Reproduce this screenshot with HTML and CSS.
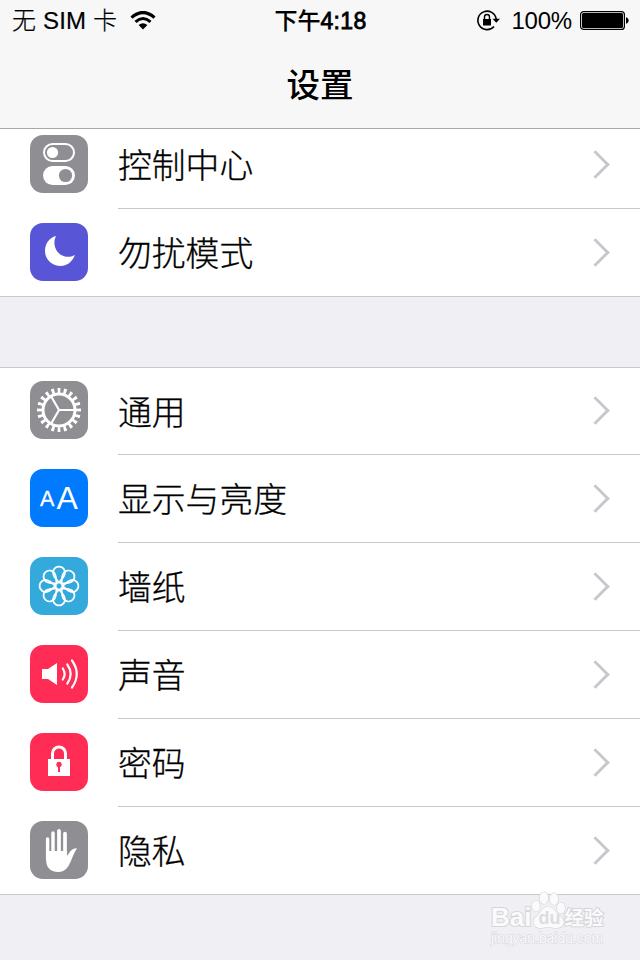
FILE: index.html
```html
<!DOCTYPE html>
<html lang="zh-CN">
<head>
<meta charset="utf-8">
<title>设置</title>
<link rel="stylesheet" href="styles.css">
</head>
<body>
<header class="header">
  <div class="status">
    <div class="carrier"><span>无 SIM 卡</span>
      <svg class="wifi" width="26" height="20" viewBox="0 0 26 20"><path d="M1.500 6.600Q13-3.600 24.500 6.600" fill="none" stroke="#000" stroke-width="3.200"/><path d="M5.500 10.800Q13 4.200 20.500 10.800" fill="none" stroke="#000" stroke-width="3"/><path d="M8.600 14.100Q13 10.200 17.400 14.100L13 18.500Z"/></svg>
    </div>
    <div class="time">下午<span class="digits">4:18</span></div>
    <div class="power">
      <svg class="rotation" width="26" height="24" viewBox="0 0 26 24"><path d="M18 18.500A9.200 9.200 0 1 1 20.200 11" fill="none" stroke="#000" stroke-width="1.600"/><path d="M16.500 10.800h7.500l-3.700 4z"/><path d="M7 11h8v6.500H7z"/><path d="M8.500 11.500V9a2.500 2.500 0 0 1 5 0v2.500" fill="none" stroke="#000" stroke-width="1.400"/></svg>
      <span class="percent">100%</span>
      <svg class="battery" width="49" height="20" viewBox="0 0 49 20"><rect x=".6" y=".6" width="43.800" height="17.800" rx="3" fill="none" stroke="#000" stroke-width="1.200"/><rect x="2" y="2" width="41" height="15" rx="1.500"/><path d="M46 6.200c3.500.6 3.500 6 0 6.600z"/></svg>
    </div>
  </div>
  <h1 class="title">设置</h1>
</header>
<main class="list">
  <section class="group first">
    <div class="row">
      <svg class="icon gray" viewBox="0 0 58 58"><rect x="14" y="9" width="30" height="17" rx="8.500" fill="none" stroke="#fff" stroke-width="2"/><circle cx="22.500" cy="17.500" r="5.600" fill="#fff"/><rect x="13" y="31" width="32" height="19" rx="9.500" fill="#fff"/><circle cx="35.500" cy="40.500" r="6.600" fill="#8e8e93"/></svg>
      <div class="label">控制中心</div>
    </div>
    <div class="row">
      <svg class="icon purple" viewBox="0 0 58 58"><path d="M26 13C20 25 32 39 45 32C42 39 37 43 30.500 43C22 43 15 36.500 15 28C15 20.500 19.500 14.500 26 13Z" fill="#fff"/></svg>
      <div class="label">勿扰模式</div>
    </div>
  </section>
  <section class="group second">
    <div class="row">
      <svg class="icon gray" viewBox="0 0 58 58"><g fill="none" stroke="#fff"><circle cx="29" cy="29" r="19.300" stroke-width="5.400" pathLength="200" stroke-dasharray="4.600 5.400" stroke-dashoffset="2.300"/><circle cx="29" cy="29" r="16" stroke-width="3"/><path d="M29 29H44M29 29L21.500 16M29 29L21.500 42" stroke-width="2.200"/></g></svg>
      <div class="label">通用</div>
    </div>
    <div class="row">
      <svg class="icon blue" viewBox="0 0 58 58"><g fill="#fff"><text x="10" y="36.700" font-size="21.500" stroke="#fff" stroke-width=".3">A</text><text x="26.500" y="40" font-size="32">A</text></g></svg>
      <div class="label">显示与亮度</div>
    </div>
    <div class="row">
      <svg class="icon cyan" viewBox="0 0 58 58"><defs><path id="petal" d="M29 25.500L24.500 20L23.500 18A6 6 0 1 1 34.500 18L33.500 20Z"/></defs><g fill="none" stroke="#fff" stroke-width="1.700"><use href="#petal"/><use href="#petal" transform="rotate(45 29 29)"/><use href="#petal" transform="rotate(90 29 29)"/><use href="#petal" transform="rotate(135 29 29)"/><use href="#petal" transform="rotate(180 29 29)"/><use href="#petal" transform="rotate(225 29 29)"/><use href="#petal" transform="rotate(270 29 29)"/><use href="#petal" transform="rotate(315 29 29)"/><circle cx="29" cy="29" r="3.500"/></g></svg>
      <div class="label">墙纸</div>
    </div>
    <div class="row">
      <svg class="icon red" viewBox="0 0 58 58"><path d="M12 24H18L27 18V40L18 34H12Z" fill="#fff"/><g fill="none" stroke="#fff" stroke-width="2.200" stroke-linecap="round"><path d="M32.800 23.500Q36.500 29 32.800 34.500M37.300 19.500Q44 29 37.300 38.500M42 15.500Q51.500 29 42 42.500"/></g></svg>
      <div class="label">声音</div>
    </div>
    <div class="row">
      <svg class="icon red" viewBox="0 0 58 58"><rect x="18" y="26" width="22" height="17" fill="#fff"/><path d="M22.500 27V20.500a6.500 6.500 0 0 1 13 0V27" fill="none" stroke="#fff" stroke-width="3"/><circle cx="29" cy="31.500" r="2.700" fill="#ff2d55"/><path d="M28 32h2v7h-2z" fill="#ff2d55"/></svg>
      <div class="label">密码</div>
    </div>
    <div class="row">
      <svg class="icon gray" viewBox="0 0 58 58"><g stroke="#fff" stroke-linecap="round" fill="none"><path d="M17.600 18V38M23 12V32" stroke-width="3.400"/><path d="M29 9.800V32M35 12.500V34" stroke-width="3.700"/></g><path d="M16 30H37V35C40 31 41.500 27 47 27.300C43.500 32 42 39 38.500 45C35 50.500 31 51 28 51C20 51 16 46 16 38Z" fill="#fff"/></svg>
      <div class="label">隐私</div>
    </div>
  </section>
</main>
<div class="watermark">
  <div class="brand"><span class="bai">Bai</span><svg class="paw" width="36" height="40" viewBox="0 0 36 40"><g fill="#fafafb" stroke="#d6d6da" stroke-width="1.200"><ellipse cx="6" cy="15" rx="4" ry="5.500"/><ellipse cx="14" cy="7" rx="4.300" ry="6"/><ellipse cx="24" cy="8" rx="4.300" ry="6"/><ellipse cx="31" cy="17" rx="4" ry="5.500"/><path d="M18 16C12 16 11 22 7 25C0 30 4 38 12 37Q18 35 24 37C34 38 37 31 30 25C26 22 24 16 18 16Z"/></g></svg><span class="du">du</span><span class="exp">经验</span></div>
  <div class="site">jingyan.baidu.com</div>
</div>
</body>
</html>
```

FILE: styles.css
```css
* { box-sizing: border-box; }
body {
  margin: 0;
  width: 640px;
  height: 960px;
  overflow: hidden;
  position: relative;
  background: #efeff4;
  color: #000;
  font-family: "Liberation Sans", "Noto Sans CJK SC", sans-serif;
}
.header {
  height: 129px;
  background: #f7f7f7;
  border-bottom: 1px solid #a9a9ac;
}
.status {
  height: 40px;
  display: grid;
  grid-template-columns: 1fr auto 1fr;
  align-items: center;
  padding: 0 11px 0 12px;
  font-size: 24px;
  line-height: 40px;
  white-space: nowrap;
}
.carrier {
  display: flex;
  align-items: center;
  font-weight: 300;
}
.carrier span, .time, .percent { padding-top: 1px; }
.carrier span { letter-spacing: .15px; -webkit-text-stroke: .2px #000; }
.wifi { margin-left: 13px; }
.time { font-size: 23px; font-weight: 500; -webkit-text-stroke: .2px #000; }
.digits { -webkit-text-stroke: .8px #000; letter-spacing: .3px; }
.power { display: flex; align-items: center; justify-content: flex-end; }
.rotation { margin-top: -1px; }
.battery { margin-top: 1px; }
.percent { margin: 0 8px 0 9px; letter-spacing: -.2px; }
.title {
  margin: 0;
  padding-top: 2px;
  font-size: 33.500px;
  font-weight: 500;
  line-height: 88px;
  text-align: center;
}
.list { height: 766px; overflow: hidden; }
.group { background: #fff; border-bottom: 1px solid #c8c7cc; }
.first { margin-top: -8px; }
.second { margin-top: 70px; border-top: 1px solid #c8c7cc; }
.row {
  height: 88px;
  padding-left: 30px;
  display: flex;
  align-items: flex-start;
}
.row:last-child { height: 87px; }
.second .row:first-child { height: 87px; }
.icon { width: 58px; height: 58px; margin-top: 14px; border-radius: 13px; flex: none; }
.second .row:first-child .icon { margin-top: 13px; }
.gray { background: #8e8e93; }
.purple { background: #5856d6; }
.blue { background: #007aff; }
.cyan { background: #34aadc; }
.red { background: #ff2d55; }
.label {
  flex: 1;
  height: 100%;
  margin-left: 30px;
  border-bottom: 1px solid #c8c7cc;
  font-size: 33.800px;
  font-weight: 300;
  -webkit-text-stroke: .3px #000;
  line-height: 91px;
  display: flex;
  justify-content: space-between;
  align-items: flex-start;
}
.row:last-child .label { border-bottom: 0; }
.label::after {
  content: "";
  width: 18px;
  height: 18px;
  margin: 34px 34px 0 0;
  border-top: 3.500px solid #c7c7cc;
  border-right: 3.500px solid #c7c7cc;
  transform: translateY(-1px) rotate(45deg) scale(.96);
}
.second .row:first-child .label { line-height: 90px; }
.second .row:first-child .label::after { margin-top: 33px; }
.watermark {
  position: absolute;
  left: 491px;
  top: 890px;
  color: #fafafb;
  -webkit-text-stroke: 2px #d6d6da;
  paint-order: stroke fill;
}
.brand { display: flex; align-items: center; height: 41px; }
.bai { font-size: 26px; font-weight: 700; line-height: 26px; margin-top: 13px; }
.paw { margin-left: -1px; }
.du { font-size: 18px; font-weight: 700; margin: 15px 4px 0 -28px; line-height: 18px; color: #dcdce0; -webkit-text-stroke-width: 0; }
.exp { font-size: 19.500px; font-weight: 700; line-height: 22px; margin-top: 14px; }
.site { font-size: 13.900px; line-height: 15px; -webkit-text-stroke-width: 1px; }
```
